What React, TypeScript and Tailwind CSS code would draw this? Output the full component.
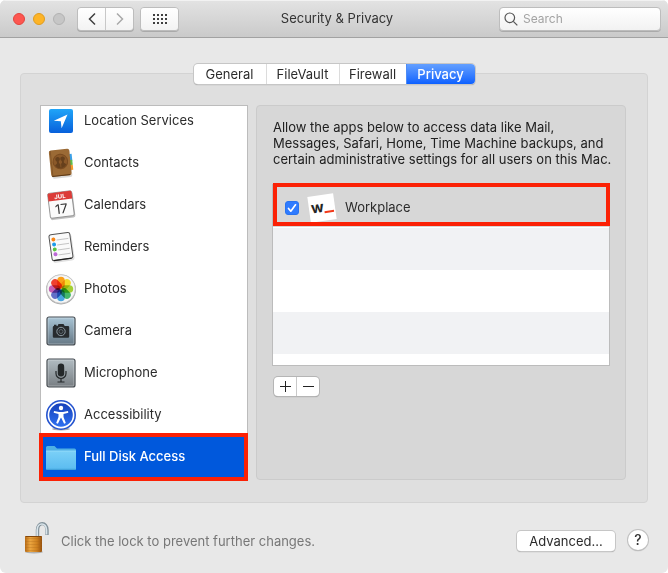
import { useState, type ReactNode } from 'react';

const petals = ['#fba01a', '#f3dc2a', '#a3d035', '#45b86c', '#4aa5e0', '#6270c8', '#c561b4', '#f0412f'];

function LocationIcon() {
  return (
    <svg viewBox="0 0 32 32" className="size-8" aria-hidden="true">
      <defs>
        <linearGradient id="loc" x1="0" y1="0" x2="0" y2="1">
          <stop offset="0" stopColor="#20a5f8" />
          <stop offset="1" stopColor="#0760db" />
        </linearGradient>
      </defs>
      <rect x="4" y="4" width="24" height="24" rx="2" fill="url(#loc)" />
      <path d="M22.500 9.500 8.800 15.700l7 .6.8 7z" fill="#fff" />
    </svg>
  );
}

function ContactsIcon() {
  return (
    <svg viewBox="0 0 32 32" className="size-8" aria-hidden="true">
      <g transform="rotate(-6 16 16)">
        <rect x="6" y="3" width="20" height="28" rx="2" fill="#000" opacity=".15" />
        <path d="M24 8h3.500v7H24z" fill="#3aa0e8" />
        <path d="M24 14h3.500v5H24z" fill="#5cc04a" />
        <path d="M24 19h3.500v5H24z" fill="#f39a2b" />
        <path d="M23 25h3v3.500h-3z" fill="#f4f0e8" />
        <rect x="5" y="2.500" width="20.500" height="26.500" rx="2" fill="#9b6a35" />
        <path d="M6.500 3v26" stroke="#835628" />
        <circle cx="15.500" cy="14.500" r="7.300" fill="#8b5929" stroke="#7a4b20" />
        <circle cx="13" cy="12" r="2.300" fill="#66401c" />
        <circle cx="18" cy="12" r="2.300" fill="#66401c" />
        <path d="M12 13.500h2v2.500l1.500 1 1.500-1v-2.500h2V16l2.200 1.800a6.500 6.500 0 0 1-11.400 0L12 16z" fill="#66401c" />
        <path d="M15.500 13v7.500" stroke="#8b5929" strokeWidth=".8" />
        <path d="M6 28.500h18" stroke="#5b3816" />
      </g>
    </svg>
  );
}

function CalendarIcon() {
  return (
    <svg viewBox="0 0 32 32" className="size-8" aria-hidden="true">
      <g transform="rotate(-7 16 16)">
        <rect x="4" y="4" width="25" height="26" rx="2" fill="#000" opacity=".25" />
        <rect x="4" y="3" width="24" height="25" rx="1.500" fill="#fbfbfb" stroke="#777" strokeWidth=".7" />
        <path d="M4 4.500Q4 3 5.500 3h21Q28 3 28 4.500V11H4z" fill="#dc3c38" />
        <text x="16" y="9.500" textAnchor="middle" fontFamily="Inter, sans-serif" fontWeight="700" fontSize="6" fill="#fff">JUL</text>
        <text x="16" y="24.500" textAnchor="middle" fontFamily="Inter, sans-serif" fontSize="13" fill="#333">17</text>
      </g>
    </svg>
  );
}

function RemindersIcon() {
  return (
    <svg viewBox="0 0 32 32" className="size-8" aria-hidden="true">
      <g transform="rotate(-8 16 16)">
        <rect x="6" y="4" width="22" height="27" rx="3" fill="#000" opacity=".12" />
        <rect x="5.500" y="2.500" width="21" height="26" rx="2" fill="#fafafa" stroke="#555" />
        <path d="M7 28.500h18" stroke="#222" strokeWidth="1.200" />
        <path d="M12.500 8.500h12M12.500 13.500h12M12.500 18.500h12M12.500 23.500h12" stroke="#bbb" strokeWidth=".8" />
        <circle cx="9.500" cy="7.500" r="2" fill="#fa8514" />
        <circle cx="9.500" cy="12.500" r="2" fill="#1d9bea" />
        <circle cx="9.500" cy="17.500" r="2" fill="#58c340" />
        <circle cx="9.500" cy="22.500" r="2" fill="#bd69d6" />
      </g>
    </svg>
  );
}

function PhotosIcon() {
  return (
    <svg viewBox="0 0 32 32" className="size-8" aria-hidden="true">
      <circle cx="16" cy="16.500" r="15" fill="#aaa" />
      <circle cx="16" cy="16" r="14.300" fill="#f6f6f6" stroke="#c4c4c4" strokeWidth=".8" />
      <g style={{ isolation: 'isolate' }}>
        {petals.map((color, i) => (
          <rect key={color} x="12.200" y="3.800" width="7.600" height="11.700" rx="3.800" fill={color} transform={`rotate(${i * 45} 16 16)`} style={{ mixBlendMode: 'multiply' }} />
        ))}
      </g>
    </svg>
  );
}

function MetalTile({ id, children }: { id: string; children: ReactNode }) {
  return (
    <svg viewBox="0 0 32 32" className="size-8" aria-hidden="true">
      <defs>
        <linearGradient id={id} x1="0" y1="0" x2="0" y2="1">
          <stop offset="0" stopColor={id === 'cam' ? '#a9c5d6' : '#b2bdc3'} />
          <stop offset="1" stopColor={id === 'cam' ? '#657784' : '#777d82'} />
        </linearGradient>
      </defs>
      <rect x="2" y="2" width="28" height="28" rx="2" fill={`url(#${id})`} stroke="#454b50" strokeWidth="1.200" />
      <rect x="3.100" y="3.100" width="25.800" height="25.800" rx="1" fill="none" stroke="#fff" strokeWidth=".7" opacity=".4" />
      {children}
    </svg>
  );
}

function CameraIcon() {
  return (
    <MetalTile id="cam">
      <path d="M9 11V9.800h2.500V11h1l1-2h5l1.200 2H23q1.200 0 1.200 1.200v9.300q0 1.200-1.200 1.200H9q-1.200 0-1.200-1.200v-9.300Q7.800 11 9 11z" fill="#272b2e" />
      <circle cx="16" cy="16.500" r="4.200" fill="#272b2e" stroke="#8d9aa2" strokeWidth="1" />
      <circle cx="16" cy="16.500" r="2" fill="none" stroke="#59636a" />
    </MetalTile>
  );
}

function MicrophoneIcon() {
  return (
    <MetalTile id="mic">
      <rect x="12.800" y="6.500" width="6.400" height="13" rx="3.200" fill="#24282a" />
      <path d="M11 14v2.500a5 5 0 0 0 10 0V14M16 21.500v3.500M12.500 25h7" fill="none" stroke="#24282a" strokeWidth="1.200" />
    </MetalTile>
  );
}

function AccessibilityIcon() {
  return (
    <svg viewBox="0 0 32 32" className="size-8" aria-hidden="true">
      <defs>
        <linearGradient id="acc" x1="0" y1="0" x2="0" y2="1">
          <stop offset="0" stopColor="#173fb8" />
          <stop offset="1" stopColor="#2f72f2" />
        </linearGradient>
      </defs>
      <ellipse cx="16" cy="30" rx="9" ry="1.500" fill="#aaa" />
      <circle cx="16" cy="16" r="15" fill="#2453cf" />
      <circle cx="16" cy="16" r="12.600" fill="url(#acc)" stroke="#fff" strokeWidth="1.600" />
      <circle cx="16" cy="9" r="2.200" fill="#fff" />
      <path d="m9 12 5 .9h4l5-.9.3 1.700-4.800 1.200v3l2.300 6.100-1.700.7-2.900-6h-.4l-2.900 6-1.700-.7 2.300-6.100v-3L8.700 13.700z" fill="#fff" />
    </svg>
  );
}

function FolderIcon() {
  return (
    <svg viewBox="0 0 32 32" className="size-8" aria-hidden="true">
      <defs>
        <linearGradient id="folder" x1="0" y1="0" x2="0" y2="1">
          <stop offset="0" stopColor="#7bd0f7" />
          <stop offset="1" stopColor="#5abbf0" />
        </linearGradient>
      </defs>
      <path d="M1 6.500Q1 5 2.500 5h7l2.500 2.500h17.500Q31 7.500 31 9v5H1z" fill="#4fb0e4" />
      <path d="M1 10h30v17.500q0 1.500-1.500 1.500h-27Q1 29 1 27.500z" fill="url(#folder)" />
      <path d="M1 10h30" stroke="#9cdefb" strokeWidth=".8" />
      <path d="M1.500 28.300h29" stroke="#3e9ed8" />
    </svg>
  );
}

const categories: { name: string; icon: ReactNode }[] = [
  { name: 'Location Services', icon: <LocationIcon /> },
  { name: 'Contacts', icon: <ContactsIcon /> },
  { name: 'Calendars', icon: <CalendarIcon /> },
  { name: 'Reminders', icon: <RemindersIcon /> },
  { name: 'Photos', icon: <PhotosIcon /> },
  { name: 'Camera', icon: <CameraIcon /> },
  { name: 'Microphone', icon: <MicrophoneIcon /> },
  { name: 'Accessibility', icon: <AccessibilityIcon /> },
  { name: 'Full Disk Access', icon: <FolderIcon /> },
];

function TitleBar() {
  const toolButton = 'flex h-[22px] items-center justify-center bg-linear-to-b from-white to-[#f3f3f3]';
  return (
    <header className="grid h-[38px] grid-cols-[1fr_auto_1fr] items-center border-b border-[#a2a2a2] bg-linear-to-b from-[#e3e3e3] to-[#cacaca] pt-px pr-[7px] pl-[13px] shadow-[inset_0_1px_0_#f2f2f2]">
      <div className="flex items-center">
        <div className="flex gap-2">
          <button aria-label="Close" className="size-3 rounded-full border border-[#e2443d] bg-[#fd5650]" />
          <button aria-label="Minimize" className="size-3 rounded-full border border-[#df9c1f] bg-[#fdb427]" />
          <button aria-label="Zoom" disabled className="size-3 rounded-full border border-[#b2b2b2] bg-[#c6c6c6]" />
        </div>
        <div className="ml-3 flex gap-px rounded-[4px] border border-[#bdbdbd] bg-[#c8c8c8] shadow-[0_1px_0_#aaa]">
          <button aria-label="Back" className={`${toolButton} w-[27px] rounded-l-[3px] text-[#3f3f3f]`}>
            <svg viewBox="0 0 8 14" className="h-[14px] w-2" fill="none" stroke="currentColor" strokeWidth="1.500"><path d="M7 1.500 1.500 7 7 12.500" /></svg>
          </button>
          <button aria-label="Forward" disabled className={`${toolButton} w-[27px] rounded-r-[3px] text-[#a9a9a9]`}>
            <svg viewBox="0 0 8 14" className="h-[14px] w-2" fill="none" stroke="currentColor" strokeWidth="1.500"><path d="M1 1.500 6.500 7 1 12.500" /></svg>
          </button>
        </div>
        <div className="ml-[6px] rounded-[4px] border border-[#bdbdbd] shadow-[0_1px_0_#aaa]">
          <button aria-label="Show all" className={`${toolButton} w-[37px] rounded-[3px]`}>
            <svg viewBox="0 0 14 10" className="h-[10px] w-[14px]" fill="#3f3f3f">
              {[0, 4, 8].map((y) => [0, 4, 8, 12].map((x) => <rect key={`${x}-${y}`} x={x} y={y} width="2" height="2" />))}
            </svg>
          </button>
        </div>
      </div>
      <h1 className="text-[13px] text-[#333]">Security &amp; Privacy</h1>
      <label className="flex h-6 w-[162px] items-center justify-self-end rounded-[4px] border border-[#bdbdbd] bg-linear-to-b from-white to-[#f2f2f2] pl-1 shadow-[0_1px_0_#aaa]">
        <svg viewBox="0 0 14 14" className="size-[14px] shrink-0" fill="none" stroke="#555" strokeWidth="1.200"><circle cx="5.800" cy="5.800" r="4.800" /><path d="m9.300 9.300 4 4" /></svg>
        <input type="search" aria-label="Search" placeholder="Search" className="ml-[5px] h-5 w-full min-w-0 bg-transparent text-[12px] leading-5 outline-none placeholder:text-[#a3a3a3]" />
      </label>
    </header>
  );
}

function Tabs() {
  const [active, setActive] = useState('Privacy');
  const tabs = [
    { name: 'General', width: 'w-[72px]' },
    { name: 'FileVault', width: 'w-[73px]' },
    { name: 'Firewall', width: 'w-[67px]' },
    { name: 'Privacy', width: 'w-[69px]' },
  ];
  return (
    <div role="tablist" className="relative z-10 mx-auto -mb-[11px] flex h-5 w-fit overflow-hidden rounded-[4px] bg-white shadow-[0_0_0_1px_#c6c6c6,0_1px_1px_#888]">
      {tabs.map((tab) => (
        <button
          key={tab.name}
          role="tab"
          aria-selected={tab.name === active}
          onClick={() => setActive(tab.name)}
          className={`${tab.width} border-l text-[13px] leading-[19px] first:border-l-0 ${tab.name === active ? 'border-[#4e8cf5] bg-linear-to-b from-[#639fff] to-[#0a60ff] font-medium text-white' : 'border-[#dcdcdc] text-[#2b2b2b]'}`}
        >
          {tab.name}
        </button>
      ))}
    </div>
  );
}

function Sidebar() {
  const [selected, setSelected] = useState('Full Disk Access');
  return (
    <nav className="relative w-[208px] shrink-0">
      <ul className="h-[375px] overflow-hidden border border-[#bcbcbc] bg-white">
        {categories.map(({ name, icon }) => (
          <li key={name} className="first:-mt-[6px]">
            <button
              onClick={() => setSelected(name)}
              className={`flex h-[42px] w-full items-center gap-[7px] pl-1 text-left text-[13px] ${name === selected ? 'bg-[#0058dc] font-medium text-white' : 'text-[#2b2b2b]'}`}
            >
              {icon}
              {name}
            </button>
          </li>
        ))}
      </ul>
      <div className="pointer-events-none absolute right-0 -bottom-px -left-px h-12 border-4 border-[#fb2105]" />
    </nav>
  );
}

function AppList() {
  const [allowed, setAllowed] = useState(true);
  return (
    <section className="min-w-0 flex-1 rounded-[4px] border border-[#cbcbcb] bg-[#d7d7d7] px-[15px] pt-[13px]">
      <p className="pl-px text-[13px] leading-4 whitespace-nowrap text-[#202020]">
        Allow the apps below to access data like Mail,
        <br />
        Messages, Safari, Home, Time Machine backups, and
        <br />
        certain administrative settings for all users on this Mac.
      </p>
      <div className="relative mt-[17px] border border-[#bcbcbc] bg-white">
        <label className="mb-px flex h-[42px] items-center bg-[#d7d7d7] pt-1 pl-3 text-[13px] text-[#2b2b2b]">
          <span className="relative flex size-[14px]">
            <input type="checkbox" checked={allowed} onChange={() => setAllowed(!allowed)} className="size-full appearance-none rounded-[3px] border border-[#999] bg-white checked:border-[#2873f0] checked:bg-[#2f7bff]" />
            {allowed && <svg viewBox="0 0 14 14" className="pointer-events-none absolute inset-0" fill="none" stroke="#fff" strokeWidth="1.700" strokeLinecap="round" strokeLinejoin="round"><path d="m3.500 7.500 2.300 2.700L10.500 3.800" /></svg>}
          </span>
          <svg viewBox="0 0 32 32" className="ml-[7px] size-8" aria-hidden="true">
            <g transform="rotate(-8 16 16)">
              <rect x="3" y="3" width="26" height="26" fill="#fff" />
              <text x="5" y="20" fontFamily="Inter, sans-serif" fontWeight="700" fontSize="15" fill="#252525">w</text>
              <path d="M18 20.500h9.500" stroke="#f1391a" strokeWidth="2" />
            </g>
          </svg>
          <span className="ml-[7px]">Workplace</span>
        </label>
        <div className="h-[42px] bg-[#f1f2f4]" />
        <div className="h-[42px]" />
        <div className="h-[42px] bg-[#f1f2f4]" />
        <div className="h-[11px]" />
        <div className="pointer-events-none absolute -top-[2px] -right-px left-0 h-[43px] border-4 border-[#fb2105]" />
      </div>
      <div className="mt-[11px] ml-[2px] flex h-[19px] w-fit divide-x divide-[#c9c9c9] rounded-[4px] bg-white shadow-[0_0_0_1px_#b5b5b5,0_1px_1px_#888]">
        <button aria-label="Add" className="flex w-[23px] items-center justify-center">
          <svg viewBox="0 0 11 11" className="size-[11px]" stroke="#222"><path d="M5.500 0v11M0 5.500h11" /></svg>
        </button>
        <button aria-label="Remove" className="flex w-[22px] items-center justify-center">
          <svg viewBox="0 0 11 11" className="size-[11px]" stroke="#222"><path d="M0 5.500h11" /></svg>
        </button>
      </div>
    </section>
  );
}

function LockIcon() {
  return (
    <svg viewBox="0 0 26 34" className="h-[34px] w-[26px]" aria-hidden="true">
      <defs>
        <linearGradient id="brass" x1="0" y1="0" x2="1" y2="0">
          <stop offset="0" stopColor="#b66a16" />
          <stop offset=".3" stopColor="#eca640" />
          <stop offset=".7" stopColor="#cf811f" />
          <stop offset="1" stopColor="#96500c" />
        </linearGradient>
      </defs>
      <path d="M13.500 16V9c0-8.500 9.500-8.500 9.500 0v5" fill="none" stroke="#82919a" strokeWidth="3.400" />
      <path d="M13.200 16V9c0-8 9.300-8 9.300 0v4.500" fill="none" stroke="#d9e4ea" strokeWidth="1.700" />
      <ellipse cx="10" cy="31" rx="9" ry="1.500" fill="#8a8a8a" opacity=".6" />
      <rect x="1" y="15" width="17" height="16" rx="1" fill="url(#brass)" />
      <path d="M1 17.500h17M1 20.500h17M1 23.500h17M1 26.500h17M1 29.500h17" stroke="#a86419" strokeWidth=".7" opacity=".4" />
      <path d="M1.500 15.500h16" stroke="#84480c" />
    </svg>
  );
}

export default function App() {
  return (
    <div className="min-h-screen bg-white font-['Inter','Liberation_Sans',sans-serif]">
      <main className="flex min-h-screen flex-col overflow-hidden rounded-[6px] bg-[#e8e8e8]">
        <TitleBar />
        <div className="px-5 pt-[26px]">
          <Tabs />
          <div className="flex gap-2 rounded-[4px] border border-[#d3d3d3] bg-[#dfdfdf] pt-[31px] pr-[21px] pb-[22px] pl-[19px]">
            <Sidebar />
            <AppList />
          </div>
        </div>
        <footer className="flex items-center px-5 pt-[18px]">
          <button aria-label="Lock" className="ml-1"><LockIcon /></button>
          <p className="mt-2 ml-[11px] text-[13px] text-[#777]">Click the lock to prevent further changes.</p>
          <button className="mt-[6px] ml-auto h-[20px] w-[98px] rounded-[4px] bg-white text-[13px] leading-5 text-[#2b2b2b] shadow-[0_0_0_1px_#c6c6c6,0_1px_1px_#888]">Advanced...</button>
          <button aria-label="Help" className="mt-1 ml-[13px] size-5 rounded-full bg-white text-[14px] leading-5 font-medium text-[#333] shadow-[0_0_0_1px_#c0c0c0,0_1px_1px_#888]">?</button>
        </footer>
      </main>
    </div>
  );
}
